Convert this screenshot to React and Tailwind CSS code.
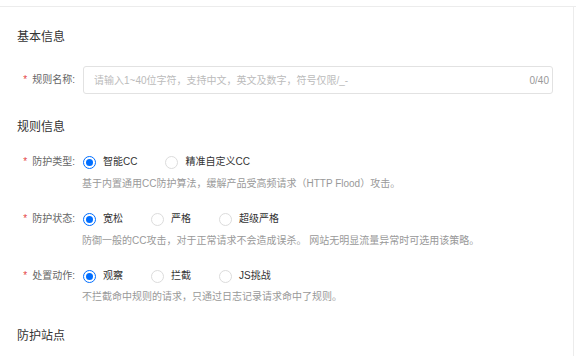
import { useState } from 'react';

const font = "font-['Liberation_Sans','Noto_Sans_CJK_SC',sans-serif]";

function Label({ children }) {
  return (
    <div className="w-[83px] shrink-0 pr-[8px] text-right text-[10px] leading-[20px] text-[#666]">
      <span className="text-[#e54545] mr-[5px]">*</span>{children}:
    </div>
  );
}

function RadioGroup({ options, value, onChange }) {
  return (
    <div className="flex items-center">
      {options.map(o => (
        <label key={o} onClick={() => onChange(o)} className="flex items-center mr-[28px] cursor-pointer">
          <span className={`w-[13px] h-[13px] rounded-full border flex items-center justify-center bg-white ${value === o ? 'border-[#006eff]' : 'border-[#dcdcdc]'}`}>
            {value === o && <span className="w-[7px] h-[7px] rounded-full bg-[#006eff]" />}
          </span>
          <span className="ml-[7px] text-[10px] leading-[20px] text-[#333]">{o}</span>
        </label>
      ))}
    </div>
  );
}

function Heading({ children, className = '' }) {
  return <h3 className={`pl-[17px] text-[12px] leading-[18px] text-[#333] ${className}`}>{children}</h3>;
}

export default function App() {
  const [type, setType] = useState('智能CC');
  const [level, setLevel] = useState('宽松');
  const [action, setAction] = useState('观察');
  const [name, setName] = useState('');

  return (
    <div className={`w-[576px] h-[356px] overflow-hidden bg-white ${font}`}>
      <div className="h-[7px] border-b border-[#ececec]" />
      <div className="w-[574px] h-[349px] border-r border-[#ececec] pt-[21px]">
        <Heading>基本信息</Heading>

        <div className="flex items-center mt-[20px]">
          <Label>规则名称</Label>
          <div className="w-[470px] h-[28px] border border-[#e2e2e2] rounded-[3px] flex items-center pl-[10px] pr-[3px]">
            <input
              value={name}
              maxLength={40}
              onChange={e => setName(e.target.value)}
              placeholder="请输入1~40位字符，支持中文，英文及数字，符号仅限/_-"
              className="flex-1 min-w-0 outline-none text-[10px] text-[#333] placeholder:text-[#bbb]"
            />
            <span className="text-[10px] text-[#999]">{name.length}/40</span>
          </div>
        </div>

        <Heading className="mt-[24px]">规则信息</Heading>

        <div className="flex items-center mt-[16px]">
          <Label>防护类型</Label>
          <RadioGroup options={['智能CC', '精准自定义CC']} value={type} onChange={setType} />
        </div>
        <p className="pl-[82px] mt-[4px] text-[10px] leading-[16px] text-[#999]">基于内置通用CC防护算法，缓解产品受高频请求（HTTP Flood）攻击。</p>

        <div className="flex items-center mt-[17px]">
          <Label>防护状态</Label>
          <RadioGroup options={['宽松', '严格', '超级严格']} value={level} onChange={setLevel} />
        </div>
        <p className="pl-[82px] mt-[4px] text-[10px] leading-[16px] text-[#999]">防御一般的CC攻击，对于正常请求不会造成误杀。 网站无明显流量异常时可选用该策略。</p>

        <div className="flex items-center mt-[17px]">
          <Label>处置动作</Label>
          <RadioGroup options={['观察', '拦截', 'JS挑战']} value={action} onChange={setAction} />
        </div>
        <p className="pl-[82px] mt-[3px] text-[10px] leading-[16px] text-[#999]">不拦截命中规则的请求，只通过日志记录请求命中了规则。</p>

        <Heading className="mt-[22px]">防护站点</Heading>
      </div>
    </div>
  );
}
